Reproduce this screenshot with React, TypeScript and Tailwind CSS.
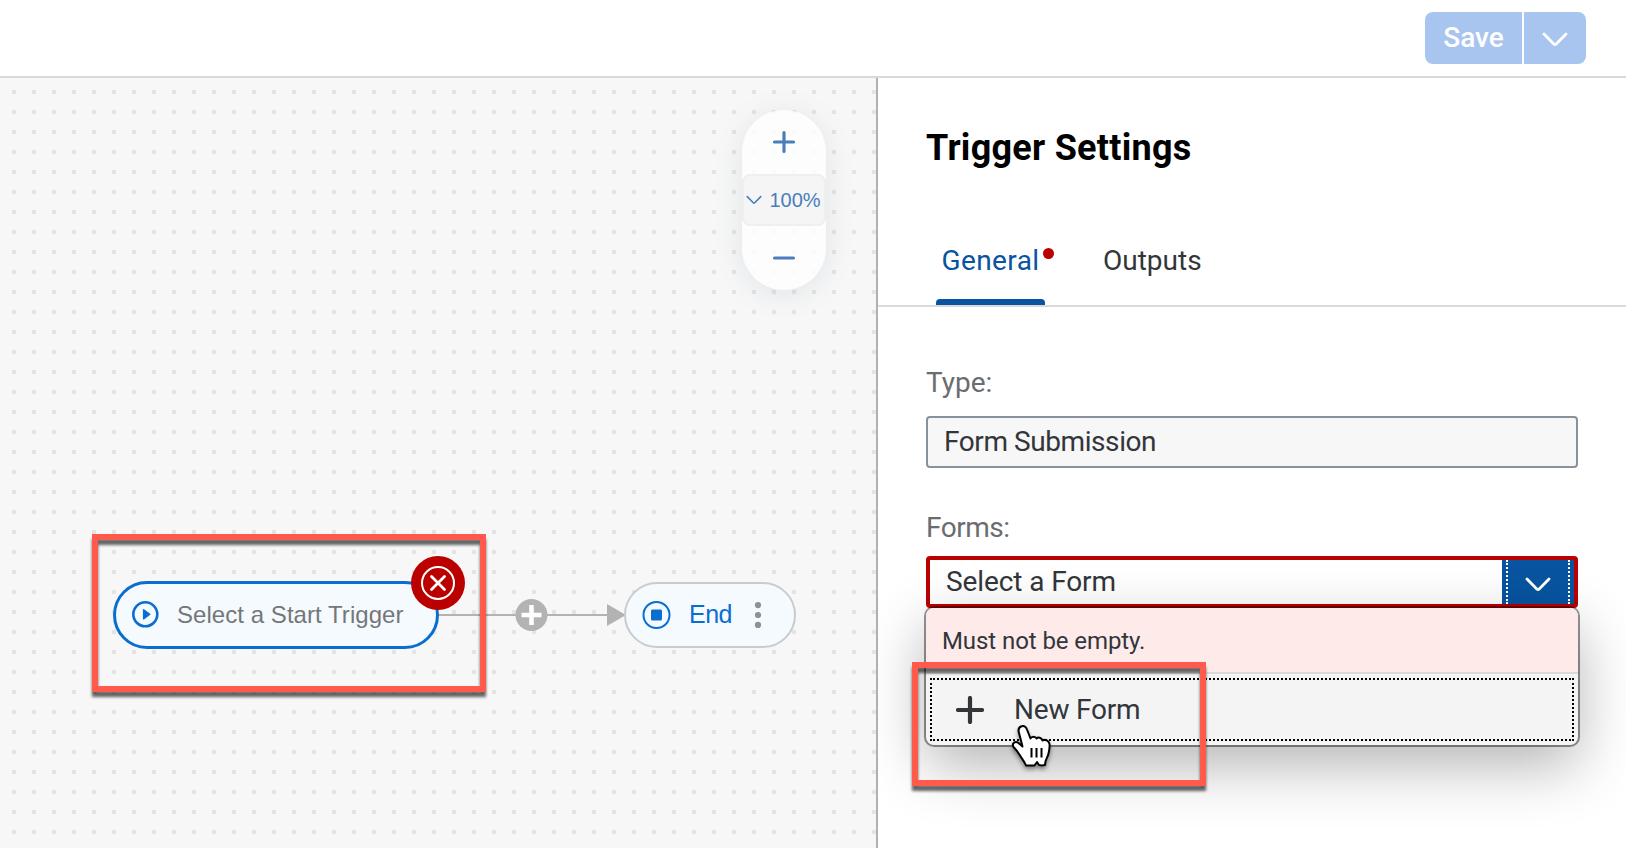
import React from "react";

const PANEL_FONT = "font-['Roboto','Open_Sans',sans-serif]";

function Chevron({ className, strokeWidth }: { className: string; strokeWidth: number }) {
  return (
    <svg className={className} viewBox="0 0 26 15" fill="none" stroke="currentColor" strokeWidth={strokeWidth} strokeLinecap="round" strokeLinejoin="round">
      <path d="M2 2 L11.8 12 Q13 13.2 14.2 12 L24 2" />
    </svg>
  );
}

function Header() {
  return (
    <header className="flex h-[78px] shrink-0 justify-end border-b-2 border-[#d9d9d9] bg-white pt-3 pr-10">
      <div className="flex h-[52px] gap-0.5 text-white">
        <button className="flex w-[97px] items-center justify-center rounded-l-lg bg-[#a8c5ef] text-[28px] font-medium">
          <span>Save</span>
        </button>
        <button aria-label="More save options" className="flex w-[62px] items-center justify-center rounded-r-lg bg-[#a8c5ef] pt-0.5">
          <Chevron className="h-[15px] w-[26px]" strokeWidth={2.8} />
        </button>
      </div>
    </header>
  );
}

function ZoomControl() {
  return (
    <div className="absolute top-8 left-[742px] flex h-[180px] w-[84px] flex-col overflow-visible rounded-full bg-white/80 text-[#4a7ebb] shadow-[0_4px_28px_rgba(90,115,140,0.14)]">
      <button aria-label="Zoom in" className="flex h-16 items-center justify-center pb-px">
        <svg className="h-6 w-6" viewBox="0 0 24 24" stroke="currentColor" strokeWidth="3.2" strokeLinecap="round">
          <path d="M12 2.5V21.5M2.5 12H21.5" />
        </svg>
      </button>
      <button className="flex h-[52px] items-center gap-[8px] rounded-lg border-2 border-[#efefef] bg-[#f5f5f5] pl-[1.5px] font-['Liberation_Sans',sans-serif] text-[20px]">
        <Chevron className="h-[10px] w-[16px] shrink-0" strokeWidth={2.6} />
        <span>100%</span>
      </button>
      <button aria-label="Zoom out" className="flex h-16 items-center justify-center pb-px">
        <svg className="h-6 w-6" viewBox="0 0 24 24" stroke="currentColor" strokeWidth="3.2" strokeLinecap="round">
          <path d="M2.5 12H21.5" />
        </svg>
      </button>
    </div>
  );
}

function FlowCanvas() {
  return (
    <main className="relative w-[876px] shrink-0 overflow-hidden bg-[#f7f7f7] font-['Liberation_Sans',sans-serif]">
      <svg className="absolute inset-0 h-full w-full">
        <defs>
          <pattern id="grid" x="12" y="12" width="20" height="20" patternUnits="userSpaceOnUse">
            <rect width="4" height="4" fill="#e4e4e4" />
          </pattern>
        </defs>
        <rect width="100%" height="100%" fill="url(#grid)" />
        <path d="M438 537H610" stroke="#b3b3b3" strokeWidth="2" />
        <path d="M607 526V548L626 537Z" fill="#b3b3b3" />
        <circle cx="531.5" cy="537" r="16" fill="#b3b3b3" />
        <path d="M531.5 527V547M521.5 537H541.5" stroke="#fff" strokeWidth="4.6" />
      </svg>

      <ZoomControl />

      <div className="absolute top-[503px] left-[113px] flex h-[68px] w-[326px] items-center rounded-full border-3 border-[#0a6ed1] bg-[#f5faff] pl-[15px]">
        <svg className="mb-0.5 h-7 w-7 shrink-0" viewBox="0 0 28 28">
          <circle cx="14.3" cy="14.3" r="12" fill="none" stroke="#0a6ed1" strokeWidth="2.6" />
          <path d="M12.6 9.7V18.9L18.8 14.3Z" fill="#0a6ed1" stroke="#0a6ed1" strokeWidth="1.4" strokeLinejoin="round" />
        </svg>
        <span className="ml-[18px] text-[24px] tracking-[0.05px] whitespace-nowrap text-[#74777a]">Select a Start Trigger</span>
      </div>

      <svg className="absolute top-[478px] left-[411px] h-[54px] w-[54px]" viewBox="0 0 54 54">
        <circle cx="27" cy="27" r="27" fill="#bb0000" />
        <circle cx="27" cy="27" r="16" fill="none" stroke="#fff" strokeWidth="2" />
        <path d="M20.5 20.5L33.5 33.5M33.5 20.5L20.5 33.5" stroke="#fff" strokeWidth="2.8" strokeLinecap="round" />
      </svg>

      <div className="absolute top-[504px] left-[624px] flex h-[66px] w-[172px] items-center rounded-full border-2 border-[#c9cbcd] bg-[#f5faff] pl-[15px]">
        <svg className="mb-px h-[30px] w-[30px] shrink-0" viewBox="0 0 30 30">
          <circle cx="15.5" cy="15" r="13" fill="none" stroke="#0a6ed1" strokeWidth="2" />
          <rect x="10" y="9.5" width="11" height="11" rx="1.5" fill="#0a6ed1" />
        </svg>
        <span className="ml-[18px] text-[25px] tracking-[-0.5px] text-[#0a6ed1]">End</span>
        <svg className="ml-[22px] h-[26px] w-2 shrink-0" viewBox="0 0 8 26" fill="#89919a">
          <circle cx="4" cy="3.1" r="3.1" />
          <circle cx="4" cy="13" r="3.1" />
          <circle cx="4" cy="22.9" r="3.1" />
        </svg>
      </div>

      <div className="absolute top-[456px] left-[92px] h-[158px] w-[394px] border-6 border-[#ff5a4c] drop-shadow-[0_5px_1.5px_rgba(0,0,0,0.6)]" />
    </main>
  );
}

function Tabs() {
  return (
    <nav className="mt-[61px] flex h-[79px] border-b-2 border-[#d9d9d9] pl-[58px] text-[28px] leading-[32px]">
      <div className="relative flex h-full w-[109px] flex-col items-center justify-between text-[#0854a0]">
        <span className="mt-[17px] tracking-[0.4px]">General</span>
        <span className="h-1.5 w-full rounded-t-[4px] bg-[#0854a0]" />
        <span className="absolute top-[20px] left-[106.5px] h-[11px] w-[11px] rounded-full bg-[#bb0000]" />
      </div>
      <div className="mt-[17px] ml-[58px] text-[#32363a]">Outputs</div>
    </nav>
  );
}

function FormsPopup() {
  return (
    <div className="absolute top-[52px] left-0 h-[137px] w-[652px] rounded-lg bg-[#f4f4f4] shadow-[0_0_0_2px_rgba(0,0,0,0.42),0_20px_60px_rgba(0,0,0,0.3)]">
      <div className="flex h-[66px] items-center rounded-t-lg border-b-2 border-[#d9d9d9] bg-[#ffeaea] pt-px pl-4 text-[24px] tracking-[-0.08px] text-[#32363a]">
        <span>Must not be empty.</span>
      </div>
      <div className="px-1 pt-1">
        <div className="flex h-[63px] items-center border-2 border-dotted border-black pl-6 text-[28px] tracking-[-0.2px] text-[#32363a]">
          <svg className="h-7 w-7" viewBox="0 0 28 28" stroke="#32363a" strokeWidth="4.2" strokeLinecap="round">
            <path d="M14 2V26M2 14H26" />
          </svg>
          <span className="ml-[30px]">New Form</span>
        </div>
      </div>
    </div>
  );
}

function Cursor() {
  return (
    <svg className="absolute top-[646px] left-[132px] h-[48px] w-[44px] drop-shadow-[0_3px_2px_rgba(0,0,0,0.4)]" viewBox="0 0 44 48">
      <path
        d="M11 2.5C13.5 1.2 16 2.6 17 5.500L20.5 14.5C21.5 12 25.500 12 26.500 14.500C28 12.700 31.500 13.500 32.500 16.500C35 15 39 16.500 39.500 20C40 24.500 39 28 38 31.500C36.500 34.500 35 36.500 35 41C33 41.500 30.500 41.500 29 41L27 38L24.500 41.500H16C14.500 37.500 12 35 10 31.500C8 28 6 25.500 3.500 23C1.500 19.500 5 16.500 8.500 19L12.500 22.500L9 9C8 6 9 3.500 11 2.500Z"
        fill="#fff"
        stroke="#000"
        strokeWidth="2"
        strokeLinejoin="round"
      />
      <path d="M21.5 24V33.5M26.5 24V33.5M31.5 24V33.5" stroke="#000" strokeWidth="2" />
    </svg>
  );
}

function SettingsPanel() {
  return (
    <aside className="relative flex min-w-0 flex-1 flex-col overflow-hidden border-l-2 border-[#b0b0b0] bg-white">
      <h1 className="mt-[51px] ml-12 text-[36px] leading-[38px] font-bold tracking-[0.27px] text-black">Trigger Settings</h1>
      <Tabs />
      <section className="pt-[58px] pl-12">
        <div className="h-[51px] text-[28px] leading-[36px] text-[#6a6d70]">Type:</div>
        <div className="flex h-[52px] w-[652px] items-center rounded border-2 border-[#89919a] bg-[#f7f7f7] pl-4 text-[28px] tracking-[-0.42px] text-[#32363a]">
          <span>Form Submission</span>
        </div>
        <div className="mt-[42px] h-[46px] text-[28px] leading-[36px] tracking-[-0.5px] text-[#6a6d70]">Forms:</div>
        <div className="relative h-[52px] w-[652px]">
          <div className="flex h-full rounded border-4 border-[#bb0000] bg-white text-[28px] text-[#32363a]">
            <span className="flex-1 pl-[16px] leading-[43px] tracking-[-0.1px]">Select a Form</span>
            <span className="flex w-[72px] bg-[#0854a0] pr-1 pl-1 text-white">
              <span className="flex w-full items-center justify-center border-x-2 border-dotted border-white pt-1">
                <Chevron className="h-[15px] w-[26px]" strokeWidth={2.8} />
              </span>
            </span>
          </div>
          <FormsPopup />
        </div>
      </section>
      <div className="absolute top-[584px] left-[34px] h-[124px] w-[294px] border-6 border-[#ff5a4c] drop-shadow-[0_5px_1.5px_rgba(0,0,0,0.6)]" />
      <Cursor />
    </aside>
  );
}

export default function App() {
  return (
    <div className={`flex h-[848px] w-[1626px] flex-col overflow-hidden bg-white ${PANEL_FONT}`}>
      <Header />
      <div className="flex min-h-0 flex-1">
        <FlowCanvas />
        <SettingsPanel />
      </div>
    </div>
  );
}
